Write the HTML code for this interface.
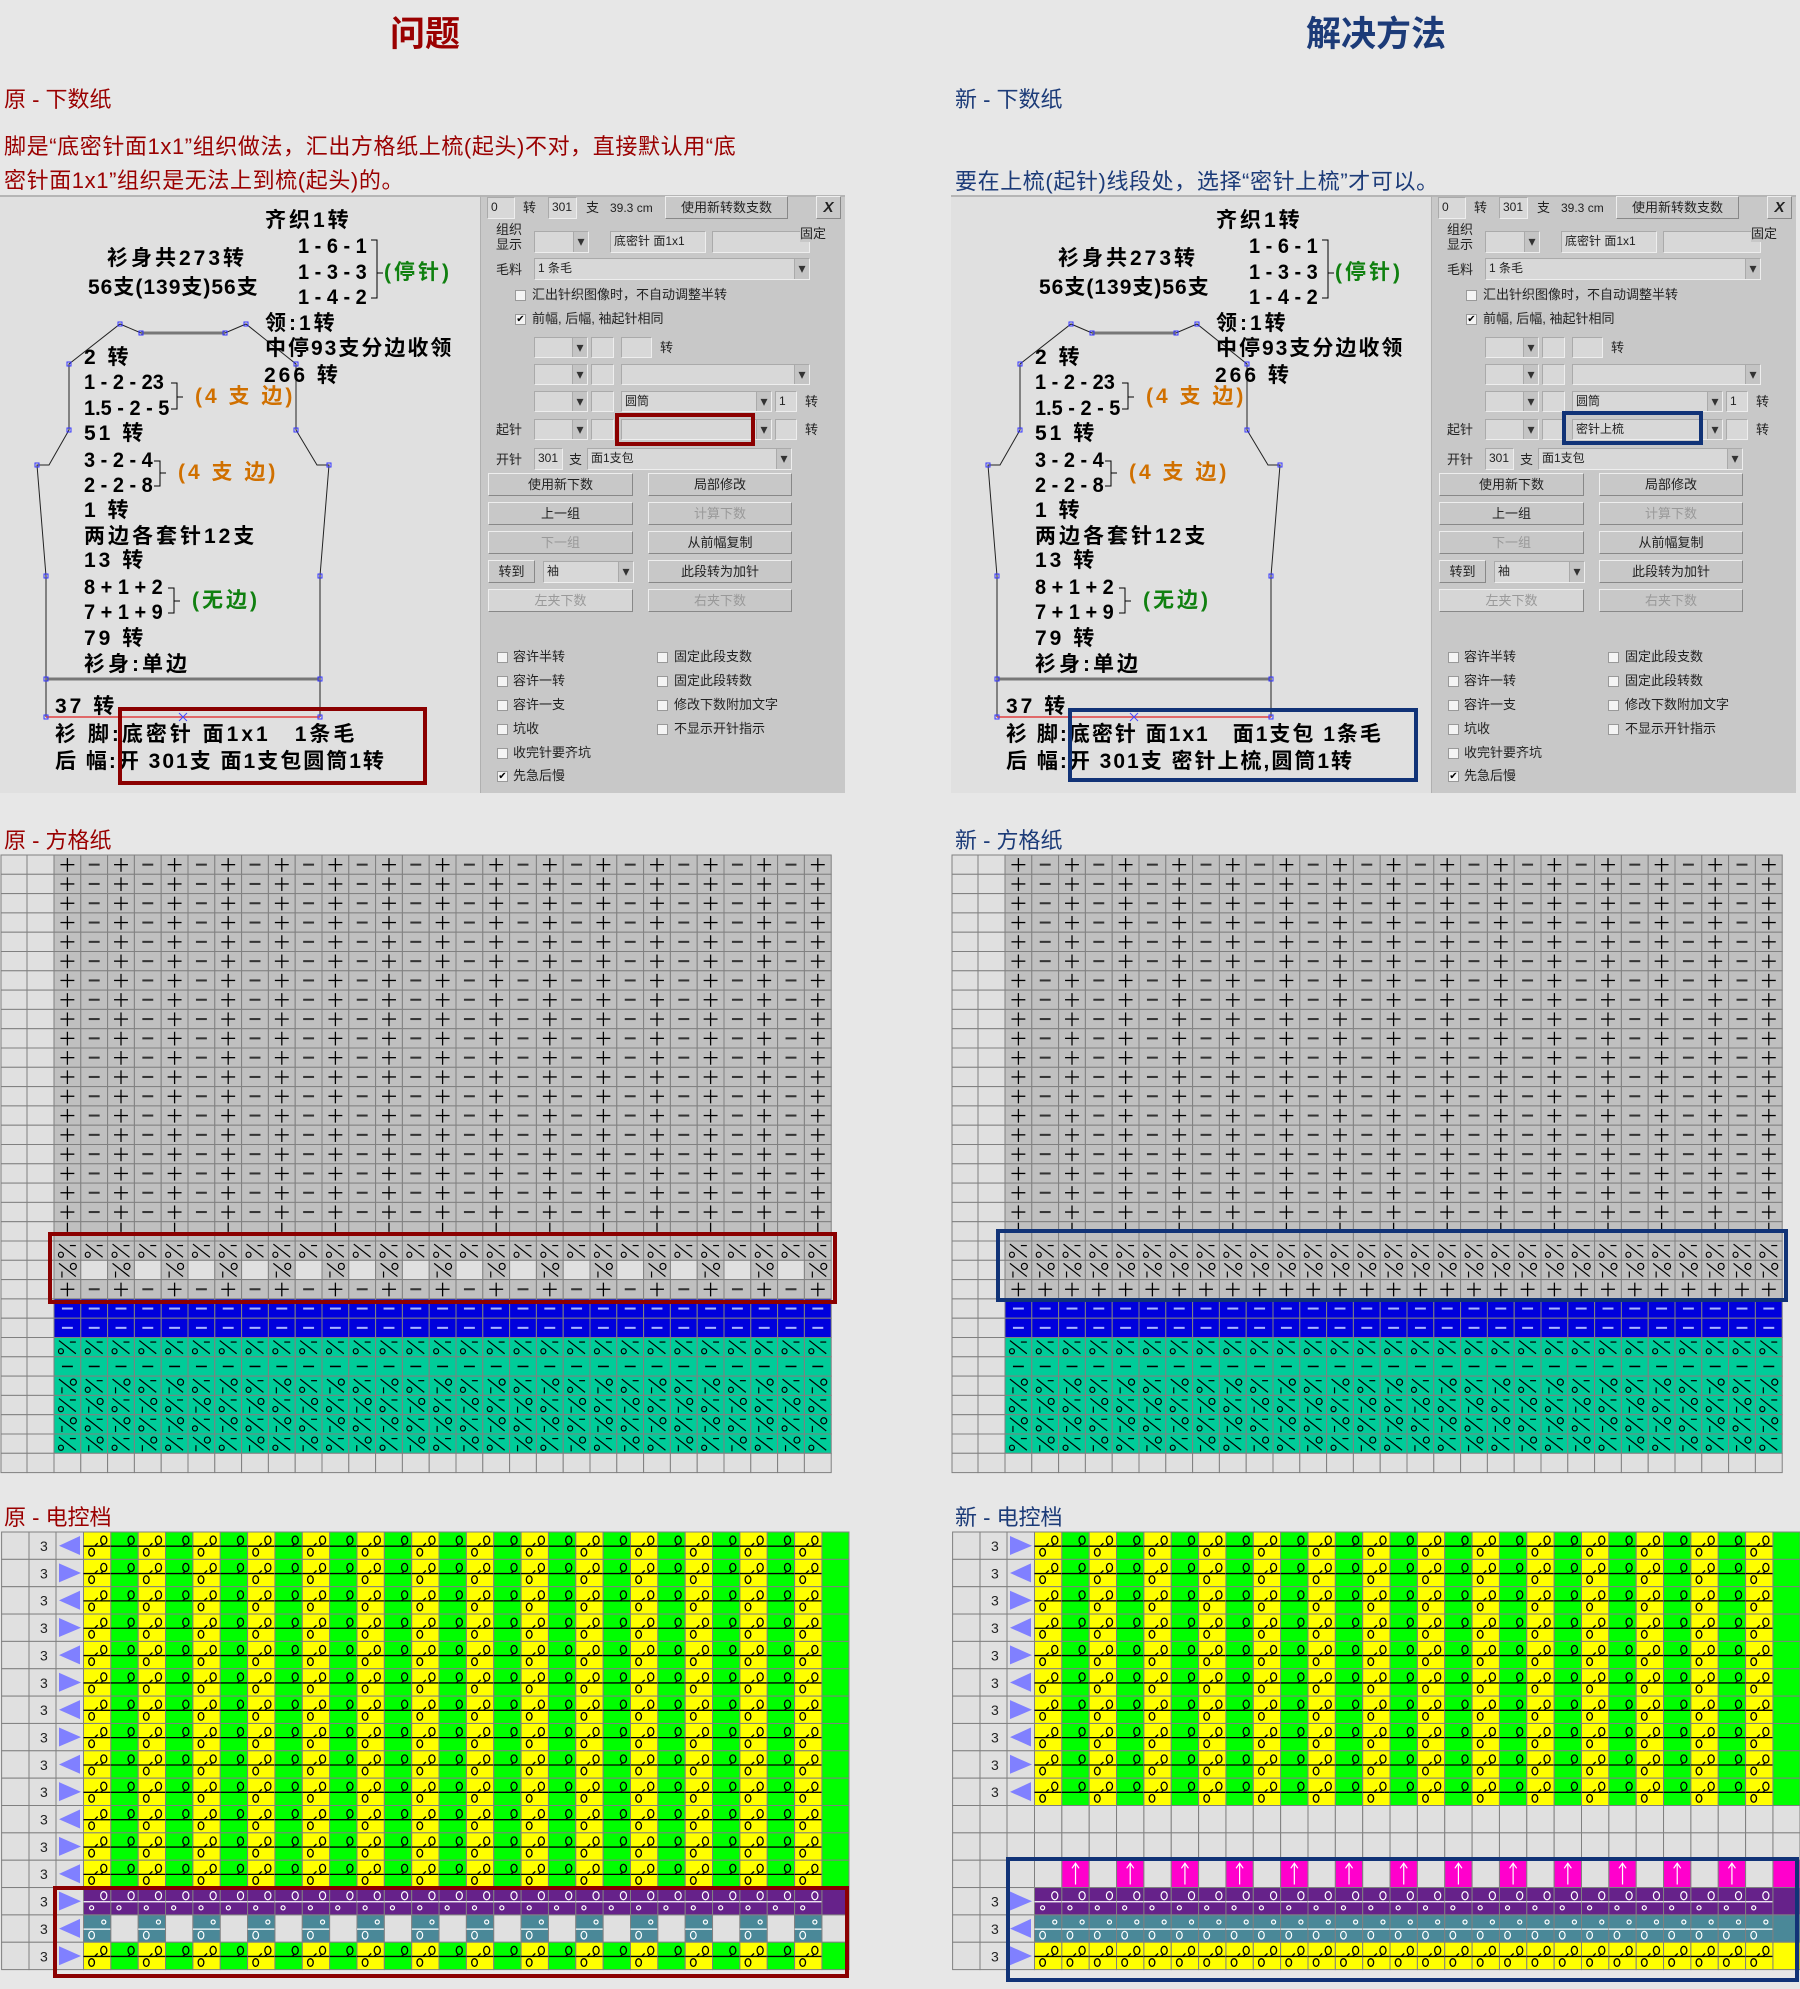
<!DOCTYPE html>
<html><head><meta charset="utf-8">
<style>
*{margin:0;padding:0;box-sizing:border-box}
body{width:1800px;height:1989px;background:#e7e7e7;position:relative;overflow:hidden;font-family:"Liberation Sans","Noto Sans CJK SC",sans-serif}
.a{position:absolute;white-space:nowrap}
.h1{font-size:35px;font-weight:bold;font-family:"Liberation Sans","Noto Sans CJK SC",sans-serif}
.lab{font-size:22px;font-family:"Liberation Sans","Noto Sans CJK SC",sans-serif}
.red{color:#9a0000}.blu{color:#1c3b78}
.shot{position:absolute;top:0;left:0;width:845px;height:800px}
.draw{position:absolute;left:0;top:195px;width:480px;height:598px;background:#e0e0e0;border-top:2px solid #b5b5b5}
.cp{position:absolute;left:480px;top:195px;width:365px;height:598px;background:#c8c8c8;border-top:2px solid #b5b5b5;border-left:1px solid #b0b0b0}
.t{position:absolute;white-space:nowrap;font-size:21px;font-weight:bold;line-height:24px;font-family:"Liberation Sans","Noto Sans CJK SC",sans-serif;color:#000;letter-spacing:3px}
.n{letter-spacing:0;transform:scaleX(.95);transform-origin:0 0}
.o{color:#d07000}.g{color:#108010}
.s{position:absolute;white-space:nowrap;font-size:13px;line-height:16px;color:#222;font-family:"Liberation Sans","Noto Sans CJK SC",sans-serif}
.f{position:absolute;background:#d8d8d8;border:1px solid #aaa;border-right-color:#eee;border-bottom-color:#eee;font-size:12px;line-height:18px;padding-left:3px;color:#222;white-space:nowrap;overflow:hidden}
.dd::after{content:"▾";position:absolute;right:0;top:0;width:14px;height:100%;background:#c4c4c4;border-left:1px solid #aaa;font-size:14px;text-align:center;color:#333}
.b{position:absolute;background:#c8c8c8;border:1px solid #eee;border-right-color:#888;border-bottom-color:#888;font-size:13px;line-height:21px;text-align:center;color:#222;white-space:nowrap}
.dis{color:#999}
.cb{position:absolute;width:11px;height:11px;background:#f4f4f4;border:1px solid #999;font-size:10px;line-height:9px;text-align:center;color:#000}
.box{position:absolute;border:4px solid #8b0000}
.bbox{position:absolute;border:4px solid #113377}
</style></head><body>

<div class="a h1 red" style="left:390px;top:6px">问题</div>
<div class="a h1 blu" style="left:1306px;top:6px">解决方法</div>
<div class="a lab red" style="left:4px;top:82px">原 - 下数纸</div>
<div class="a lab blu" style="left:955px;top:82px">新 - 下数纸</div>
<div class="a lab red" style="left:4px;top:130px;line-height:34px;letter-spacing:0.6px">脚是“底密针面1x1”组织做法，汇出方格纸上梳(起头)不对，直接默认用“底<br>密针面1x1”组织是无法上到梳(起头)的。</div>
<div class="a lab blu" style="left:955px;top:164px;letter-spacing:0.6px">要在上梳(起针)线段处，选择“密针上梳”才可以。</div>

<div class="a lab red" style="left:4px;top:823px">原 - 方格纸</div>
<div class="a lab blu" style="left:955px;top:823px">新 - 方格纸</div>
<div class="a lab red" style="left:4px;top:1500px">原 - 电控档</div>
<div class="a lab blu" style="left:955px;top:1500px">新 - 电控档</div>

<!-- LEFT SCREENSHOT -->
<div class="shot" style="left:0">
<div class="draw"></div>
<svg class="a" style="left:0;top:0" width="480" height="800">
<polyline fill="none" stroke="#222" stroke-width="1" points="46,717 46,679 46,576 37,465 49,465 69,430 69,364 120,324 141,333 225,333 246,324 296,364 296,430 317,465 329,465 320,576 320,679 320,717"/>
<line x1="141" y1="333" x2="225" y2="333" stroke="#777" stroke-width="3"/>
<line x1="46" y1="679" x2="320" y2="679" stroke="#777" stroke-width="3"/>
<line x1="46" y1="717" x2="320" y2="717" stroke="#e04040" stroke-width="1.5"/>
<path d="M179,713 l8,8 M187,713 l-8,8" stroke="#44f" stroke-width="1"/>
<g fill="none" stroke="#33f" stroke-width="1"><rect x="44" y="715" width="4" height="4"/><rect x="318" y="715" width="4" height="4"/><rect x="44" y="677" width="4" height="4"/><rect x="318" y="677" width="4" height="4"/><rect x="44" y="574" width="4" height="4"/><rect x="318" y="574" width="4" height="4"/><rect x="35" y="463" width="4" height="4"/><rect x="327" y="463" width="4" height="4"/><rect x="67" y="428" width="4" height="4"/><rect x="294" y="428" width="4" height="4"/><rect x="67" y="362" width="4" height="4"/><rect x="294" y="362" width="4" height="4"/><rect x="118" y="322" width="4" height="4"/><rect x="139" y="331" width="4" height="4"/><rect x="223" y="331" width="4" height="4"/><rect x="244" y="322" width="4" height="4"/></g>
<g stroke="#000" fill="none"><path d="M371,240 h6 v58 h-6 M377,273 h6"/><path d="M171,383 h6 v26 h-6 M177,397 h6"/><path d="M154,461 h6 v25 h-6 M160,473 h6"/><path d="M168,588 h6 v25 h-6 M174,601 h6"/></g>
</svg>
<div class="t" style="left:265px;top:209px">齐织1转</div>
<div class="t" style="left:107px;top:247px">衫身共273转</div>
<div class="t" style="left:88px;top:276px;letter-spacing:1px">56支(139支)56支</div>
<div class="t n" style="left:298px;top:235px">1 - 6 - 1</div>
<div class="t n" style="left:298px;top:261px">1 - 3 - 3</div>
<div class="t n" style="left:298px;top:286px">1 - 4 - 2</div>
<div class="t g" style="left:384px;top:261px">(停针)</div>
<div class="t" style="left:265px;top:312px">领:1转</div>
<div class="t" style="left:265px;top:337px;letter-spacing:2px">中停93支分边收领</div>
<div class="t" style="left:264px;top:364px">266 转</div>
<div class="t" style="left:84px;top:346px">2 转</div>
<div class="t n" style="left:84px;top:371px">1 - 2 - 23</div>
<div class="t n" style="left:84px;top:397px">1.5 - 2 - 5</div>
<div class="t o" style="left:195px;top:385px">(4 支 边)</div>
<div class="t" style="left:84px;top:422px">51 转</div>
<div class="t n" style="left:84px;top:449px">3 - 2 - 4</div>
<div class="t n" style="left:84px;top:474px">2 - 2 - 8</div>
<div class="t o" style="left:178px;top:461px">(4 支 边)</div>
<div class="t" style="left:84px;top:499px">1 转</div>
<div class="t" style="left:84px;top:525px">两边各套针12支</div>
<div class="t" style="left:84px;top:549px">13 转</div>
<div class="t n" style="left:84px;top:576px">8 + 1 + 2</div>
<div class="t n" style="left:84px;top:601px">7 + 1 + 9</div>
<div class="t g" style="left:192px;top:589px">(无边)</div>
<div class="t" style="left:84px;top:627px">79 转</div>
<div class="t" style="left:84px;top:653px">衫身:单边</div>
<div class="t" style="left:55px;top:695px">37 转</div>
<div class="t" style="left:55px;top:723px">衫 脚:底密针 面1x1　1条毛</div>
<div class="t" style="left:55px;top:750px;letter-spacing:2px">后 幅:开 301支 面1支包圆筒1转</div>
<div class="box" style="left:118px;top:707px;width:309px;height:78px"></div>

<div class="cp"></div>
<div class="f" style="left:487px;top:197px;width:28px;height:22px">0</div>
<div class="s" style="left:523px;top:200px">转</div>
<div class="f" style="left:548px;top:197px;width:29px;height:22px">301</div>
<div class="s" style="left:586px;top:200px">支</div>
<div class="s" style="left:610px;top:200px;font-size:12px">39.3 cm</div>
<div class="b" style="left:665px;top:196px;width:123px;height:23px">使用新转数支数</div>
<div class="b" style="left:816px;top:196px;width:25px;height:23px;font-weight:bold;font-style:italic;font-size:15px">X</div>
<div class="s" style="left:496px;top:222px;line-height:15px">组织<br>显示</div>
<div class="f dd" style="left:534px;top:231px;width:55px;height:22px"></div>
<div class="f" style="left:610px;top:231px;width:96px;height:22px">底密针 面1x1</div>
<div class="f" style="left:712px;top:231px;width:98px;height:22px"></div>
<div class="s" style="left:800px;top:226px;background:#c8c8c8">固定</div>
<div class="s" style="left:496px;top:262px">毛料</div>
<div class="f dd" style="left:534px;top:258px;width:276px;height:22px">1 条毛</div>
<div class="cb" style="left:515px;top:290px"></div><div class="s" style="left:532px;top:287px">汇出针织图像时，不自动调整半转</div>
<div class="cb" style="left:515px;top:314px">✔</div><div class="s" style="left:532px;top:311px">前幅, 后幅, 袖起针相同</div>
<div class="f dd" style="left:534px;top:337px;width:54px;height:21px"></div><div class="f" style="left:591px;top:337px;width:23px;height:21px"></div><div class="f" style="left:621px;top:337px;width:31px;height:21px"></div><div class="s" style="left:660px;top:340px">转</div>
<div class="f dd" style="left:534px;top:364px;width:54px;height:21px"></div><div class="f" style="left:591px;top:364px;width:23px;height:21px"></div><div class="f dd" style="left:621px;top:364px;width:189px;height:21px"></div>
<div class="f dd" style="left:534px;top:391px;width:54px;height:21px"></div><div class="f" style="left:591px;top:391px;width:23px;height:21px"></div><div class="f dd" style="left:621px;top:391px;width:151px;height:21px">圆筒</div><div class="f" style="left:775px;top:391px;width:22px;height:21px">1</div><div class="s" style="left:805px;top:394px">转</div>
<div class="s" style="left:496px;top:422px">起针</div>
<div class="f dd" style="left:534px;top:419px;width:54px;height:21px"></div><div class="f" style="left:591px;top:419px;width:23px;height:21px"></div><div class="f dd" style="left:621px;top:419px;width:151px;height:21px"></div><div class="f" style="left:775px;top:419px;width:22px;height:21px"></div><div class="s" style="left:805px;top:422px">转</div>
<div class="box" style="left:615px;top:413px;width:140px;height:33px"></div>
<div class="s" style="left:496px;top:452px">开针</div>
<div class="f" style="left:534px;top:448px;width:29px;height:22px">301</div><div class="s" style="left:569px;top:452px">支</div><div class="f dd" style="left:587px;top:448px;width:205px;height:22px">面1支包</div>
<div class="b" style="left:488px;top:473px;width:145px;height:23px">使用新下数</div><div class="b" style="left:648px;top:473px;width:144px;height:23px">局部修改</div>
<div class="b" style="left:488px;top:502px;width:145px;height:23px">上一组</div><div class="b dis" style="left:648px;top:502px;width:144px;height:23px">计算下数</div>
<div class="b dis" style="left:488px;top:531px;width:145px;height:23px">下一组</div><div class="b" style="left:648px;top:531px;width:144px;height:23px">从前幅复制</div>
<div class="b" style="left:488px;top:560px;width:47px;height:23px">转到</div><div class="f dd" style="left:543px;top:561px;width:91px;height:22px">袖</div><div class="b" style="left:648px;top:560px;width:144px;height:23px">此段转为加针</div>
<div class="b dis" style="left:488px;top:589px;width:145px;height:23px;background:#d6d6d6">左夹下数</div><div class="b dis" style="left:648px;top:589px;width:144px;height:23px">右夹下数</div>
<div class="cb" style="left:497px;top:652px"></div><div class="s" style="left:513px;top:649px">容许半转</div>
<div class="cb" style="left:657px;top:652px"></div><div class="s" style="left:674px;top:649px">固定此段支数</div>
<div class="cb" style="left:497px;top:676px"></div><div class="s" style="left:513px;top:673px">容许一转</div>
<div class="cb" style="left:657px;top:676px"></div><div class="s" style="left:674px;top:673px">固定此段转数</div>
<div class="cb" style="left:497px;top:700px"></div><div class="s" style="left:513px;top:697px">容许一支</div>
<div class="cb" style="left:657px;top:700px"></div><div class="s" style="left:674px;top:697px">修改下数附加文字</div>
<div class="cb" style="left:497px;top:724px"></div><div class="s" style="left:513px;top:721px">坑收</div>
<div class="cb" style="left:657px;top:724px"></div><div class="s" style="left:674px;top:721px">不显示开针指示</div>
<div class="cb" style="left:497px;top:748px"></div><div class="s" style="left:513px;top:745px">收完针要齐坑</div>
<div class="cb" style="left:497px;top:771px">✔</div><div class="s" style="left:513px;top:768px">先急后慢</div>
</div>

<!-- RIGHT SCREENSHOT -->
<div class="shot" style="left:951px">
<div class="draw"></div>
<svg class="a" style="left:0;top:0" width="480" height="800">
<polyline fill="none" stroke="#222" stroke-width="1" points="46,717 46,679 46,576 37,465 49,465 69,430 69,364 120,324 141,333 225,333 246,324 296,364 296,430 317,465 329,465 320,576 320,679 320,717"/>
<line x1="141" y1="333" x2="225" y2="333" stroke="#777" stroke-width="3"/>
<line x1="46" y1="679" x2="320" y2="679" stroke="#777" stroke-width="3"/>
<line x1="46" y1="717" x2="320" y2="717" stroke="#e04040" stroke-width="1.5"/>
<path d="M179,713 l8,8 M187,713 l-8,8" stroke="#44f" stroke-width="1"/>
<g fill="none" stroke="#33f" stroke-width="1"><rect x="44" y="715" width="4" height="4"/><rect x="318" y="715" width="4" height="4"/><rect x="44" y="677" width="4" height="4"/><rect x="318" y="677" width="4" height="4"/><rect x="44" y="574" width="4" height="4"/><rect x="318" y="574" width="4" height="4"/><rect x="35" y="463" width="4" height="4"/><rect x="327" y="463" width="4" height="4"/><rect x="67" y="428" width="4" height="4"/><rect x="294" y="428" width="4" height="4"/><rect x="67" y="362" width="4" height="4"/><rect x="294" y="362" width="4" height="4"/><rect x="118" y="322" width="4" height="4"/><rect x="139" y="331" width="4" height="4"/><rect x="223" y="331" width="4" height="4"/><rect x="244" y="322" width="4" height="4"/></g>
<g stroke="#000" fill="none"><path d="M371,240 h6 v58 h-6 M377,273 h6"/><path d="M171,383 h6 v26 h-6 M177,397 h6"/><path d="M154,461 h6 v25 h-6 M160,473 h6"/><path d="M168,588 h6 v25 h-6 M174,601 h6"/></g>
</svg>
<div class="t" style="left:265px;top:209px">齐织1转</div>
<div class="t" style="left:107px;top:247px">衫身共273转</div>
<div class="t" style="left:88px;top:276px;letter-spacing:1px">56支(139支)56支</div>
<div class="t n" style="left:298px;top:235px">1 - 6 - 1</div>
<div class="t n" style="left:298px;top:261px">1 - 3 - 3</div>
<div class="t n" style="left:298px;top:286px">1 - 4 - 2</div>
<div class="t g" style="left:384px;top:261px">(停针)</div>
<div class="t" style="left:265px;top:312px">领:1转</div>
<div class="t" style="left:265px;top:337px;letter-spacing:2px">中停93支分边收领</div>
<div class="t" style="left:264px;top:364px">266 转</div>
<div class="t" style="left:84px;top:346px">2 转</div>
<div class="t n" style="left:84px;top:371px">1 - 2 - 23</div>
<div class="t n" style="left:84px;top:397px">1.5 - 2 - 5</div>
<div class="t o" style="left:195px;top:385px">(4 支 边)</div>
<div class="t" style="left:84px;top:422px">51 转</div>
<div class="t n" style="left:84px;top:449px">3 - 2 - 4</div>
<div class="t n" style="left:84px;top:474px">2 - 2 - 8</div>
<div class="t o" style="left:178px;top:461px">(4 支 边)</div>
<div class="t" style="left:84px;top:499px">1 转</div>
<div class="t" style="left:84px;top:525px">两边各套针12支</div>
<div class="t" style="left:84px;top:549px">13 转</div>
<div class="t n" style="left:84px;top:576px">8 + 1 + 2</div>
<div class="t n" style="left:84px;top:601px">7 + 1 + 9</div>
<div class="t g" style="left:192px;top:589px">(无边)</div>
<div class="t" style="left:84px;top:627px">79 转</div>
<div class="t" style="left:84px;top:653px">衫身:单边</div>
<div class="t" style="left:55px;top:695px">37 转</div>
<div class="t" style="left:55px;top:723px;letter-spacing:2px">衫 脚:底密针 面1x1　面1支包 1条毛</div>
<div class="t" style="left:55px;top:750px;letter-spacing:2px">后 幅:开 301支 密针上梳,圆筒1转</div>
<div class="bbox" style="left:117px;top:708px;width:350px;height:74px"></div>

<div class="cp"></div>
<div class="f" style="left:487px;top:197px;width:28px;height:22px">0</div>
<div class="s" style="left:523px;top:200px">转</div>
<div class="f" style="left:548px;top:197px;width:29px;height:22px">301</div>
<div class="s" style="left:586px;top:200px">支</div>
<div class="s" style="left:610px;top:200px;font-size:12px">39.3 cm</div>
<div class="b" style="left:665px;top:196px;width:123px;height:23px">使用新转数支数</div>
<div class="b" style="left:816px;top:196px;width:25px;height:23px;font-weight:bold;font-style:italic;font-size:15px">X</div>
<div class="s" style="left:496px;top:222px;line-height:15px">组织<br>显示</div>
<div class="f dd" style="left:534px;top:231px;width:55px;height:22px"></div>
<div class="f" style="left:610px;top:231px;width:96px;height:22px">底密针 面1x1</div>
<div class="f" style="left:712px;top:231px;width:98px;height:22px"></div>
<div class="s" style="left:800px;top:226px;background:#c8c8c8">固定</div>
<div class="s" style="left:496px;top:262px">毛料</div>
<div class="f dd" style="left:534px;top:258px;width:276px;height:22px">1 条毛</div>
<div class="cb" style="left:515px;top:290px"></div><div class="s" style="left:532px;top:287px">汇出针织图像时，不自动调整半转</div>
<div class="cb" style="left:515px;top:314px">✔</div><div class="s" style="left:532px;top:311px">前幅, 后幅, 袖起针相同</div>
<div class="f dd" style="left:534px;top:337px;width:54px;height:21px"></div><div class="f" style="left:591px;top:337px;width:23px;height:21px"></div><div class="f" style="left:621px;top:337px;width:31px;height:21px"></div><div class="s" style="left:660px;top:340px">转</div>
<div class="f dd" style="left:534px;top:364px;width:54px;height:21px"></div><div class="f" style="left:591px;top:364px;width:23px;height:21px"></div><div class="f dd" style="left:621px;top:364px;width:189px;height:21px"></div>
<div class="f dd" style="left:534px;top:391px;width:54px;height:21px"></div><div class="f" style="left:591px;top:391px;width:23px;height:21px"></div><div class="f dd" style="left:621px;top:391px;width:151px;height:21px">圆筒</div><div class="f" style="left:775px;top:391px;width:22px;height:21px">1</div><div class="s" style="left:805px;top:394px">转</div>
<div class="s" style="left:496px;top:422px">起针</div>
<div class="f dd" style="left:534px;top:419px;width:54px;height:21px"></div><div class="f" style="left:591px;top:419px;width:23px;height:21px"></div><div class="f dd" style="left:621px;top:419px;width:151px;height:21px">密针上梳</div><div class="f" style="left:775px;top:419px;width:22px;height:21px"></div><div class="s" style="left:805px;top:422px">转</div>
<div class="bbox" style="left:611px;top:411px;width:141px;height:34px"></div>
<div class="s" style="left:496px;top:452px">开针</div>
<div class="f" style="left:534px;top:448px;width:29px;height:22px">301</div><div class="s" style="left:569px;top:452px">支</div><div class="f dd" style="left:587px;top:448px;width:205px;height:22px">面1支包</div>
<div class="b" style="left:488px;top:473px;width:145px;height:23px">使用新下数</div><div class="b" style="left:648px;top:473px;width:144px;height:23px">局部修改</div>
<div class="b" style="left:488px;top:502px;width:145px;height:23px">上一组</div><div class="b dis" style="left:648px;top:502px;width:144px;height:23px">计算下数</div>
<div class="b dis" style="left:488px;top:531px;width:145px;height:23px">下一组</div><div class="b" style="left:648px;top:531px;width:144px;height:23px">从前幅复制</div>
<div class="b" style="left:488px;top:560px;width:47px;height:23px">转到</div><div class="f dd" style="left:543px;top:561px;width:91px;height:22px">袖</div><div class="b" style="left:648px;top:560px;width:144px;height:23px">此段转为加针</div>
<div class="b dis" style="left:488px;top:589px;width:145px;height:23px;background:#d6d6d6">左夹下数</div><div class="b dis" style="left:648px;top:589px;width:144px;height:23px">右夹下数</div>
<div class="cb" style="left:497px;top:652px"></div><div class="s" style="left:513px;top:649px">容许半转</div>
<div class="cb" style="left:657px;top:652px"></div><div class="s" style="left:674px;top:649px">固定此段支数</div>
<div class="cb" style="left:497px;top:676px"></div><div class="s" style="left:513px;top:673px">容许一转</div>
<div class="cb" style="left:657px;top:676px"></div><div class="s" style="left:674px;top:673px">固定此段转数</div>
<div class="cb" style="left:497px;top:700px"></div><div class="s" style="left:513px;top:697px">容许一支</div>
<div class="cb" style="left:657px;top:700px"></div><div class="s" style="left:674px;top:697px">修改下数附加文字</div>
<div class="cb" style="left:497px;top:724px"></div><div class="s" style="left:513px;top:721px">坑收</div>
<div class="cb" style="left:657px;top:724px"></div><div class="s" style="left:674px;top:721px">不显示开针指示</div>
<div class="cb" style="left:497px;top:748px"></div><div class="s" style="left:513px;top:745px">收完针要齐坑</div>
<div class="cb" style="left:497px;top:771px">✔</div><div class="s" style="left:513px;top:768px">先急后慢</div>
</div>

<svg id="g" class="a" style="left:0;top:0" width="1800" height="1989" xmlns="http://www.w3.org/2000/svg">
<defs>
<g id="pl" stroke="#000" stroke-width="1.3"><line x1="13.5" y1="3" x2="13.5" y2="16.5"/><line x1="6.5" y1="9.5" x2="20.5" y2="9.5"/></g>
<g id="mi" stroke="#333" stroke-width="2"><line x1="8" y1="9.5" x2="19" y2="9.5"/></g>
<g id="ba" stroke="#000" stroke-width="1.3"><line x1="13.5" y1="1" x2="13.5" y2="10"/></g>
<g id="sa" stroke="#000" stroke-width="1.2" fill="none"><line x1="5" y1="3" x2="22" y2="16"/><line x1="16" y1="4.5" x2="22" y2="4.5"/><circle cx="7" cy="13.5" r="2.5"/></g>
<g id="sb" stroke="#000" stroke-width="1.2" fill="none"><line x1="5" y1="3" x2="22" y2="16"/><circle cx="19.5" cy="6" r="3"/><line x1="8" y1="11" x2="8" y2="17"/></g>
<g id="bm" stroke="#aab4ff" stroke-width="2"><line x1="8" y1="9.5" x2="19" y2="9.5"/></g>
<g id="td" stroke="#000" stroke-width="1.5"><line x1="8" y1="9.5" x2="19" y2="9.5"/></g>
<g id="ye" stroke="#000" stroke-width="1.3" fill="none"><line x1="0" y1="14" x2="27" y2="14"/><path d="M11,14 L14,11"/><ellipse cx="20" cy="8" rx="3" ry="4"/><path d="M17,14 L19,12"/><ellipse cx="8" cy="20" rx="2.8" ry="3.8"/></g>
<g id="gr" stroke="#000" stroke-width="1.3" fill="none"><line x1="0" y1="14" x2="27" y2="14"/><ellipse cx="20" cy="8" rx="3" ry="4"/><path d="M17,14 L19,12"/></g>
<g id="pu" stroke="#fff" stroke-width="1.2" fill="none"><line x1="0" y1="14" x2="27" y2="14"/><ellipse cx="20" cy="8" rx="3" ry="4"/><circle cx="8" cy="20" r="2"/></g>
<g id="te" stroke="#fff" stroke-width="1.2" fill="none"><line x1="0" y1="14" x2="27" y2="14"/><circle cx="20" cy="7" r="2"/><ellipse cx="8" cy="20" rx="2.8" ry="3.8"/></g>
<g id="ar" stroke="#fff" stroke-width="1.2"><line x1="13.5" y1="24" x2="13.5" y2="3"/><path d="M10,8 L13.5,3 L17,8" fill="none"/></g>
</defs>
</svg>
<div class="box" style="left:48px;top:1232px;width:789px;height:72px"></div>
<div class="bbox" style="left:996px;top:1229px;width:792px;height:73px"></div>
<div class="box" style="left:53px;top:1886px;width:796px;height:92px"></div>
<div class="bbox" style="left:1006px;top:1857px;width:793px;height:125px"></div>

<script>
var S=document.getElementById('g'),out='';
function R(x,y,w,h,f){out+='<rect x="'+x+'" y="'+y+'" width="'+w+'" height="'+h+'" fill="'+f+'" stroke="#808080" stroke-width="1"/>';}
function U(id,x,y,sx,sy){out+='<use href="#'+id+'" transform="translate('+x+','+y+') scale('+sx+','+sy+')"/>';}
function sq(x0,right){
 var y0=855,rh=19.3,cw=26.8;
 for(var i=0;i<32;i++){
  var y=y0+i*rh;
  R(x0+1,y,26,rh,'#e0e0e0');R(x0+27,y,27,rh,'#e0e0e0');
  for(var j=0;j<29;j++){
   var x=x0+54+j*cw,bg='#c0c0c0',sym=null;
   if(i<=18){sym=j%2?'mi':'pl';}
   else if(i==19){sym=j%2?null:'ba';}
   else if(i==20){sym='sa';}
   else if(i==21){if(right)sym='sb';else{ if(j%2){bg='#e0e0e0';}else sym='sb';}}
   else if(i==22){sym=right?'pl':(j%2?'mi':'pl');}
   else if(i<=24){bg='#0000dd';sym='bm';}
   else if(i<=30){bg='#00cc99';var k=i-25;
     if(k==0)sym='sa';else if(k==1)sym='td';else sym=((j+k)%2?'sa':'sb');}
   else {bg='#e0e0e0';}
   R(x,y,cw,rh,bg);
   if(sym)U(sym,x,y,cw/27,rh/19);
  }
 }
}
sq(0,false);sq(951,true);
function tri(x,y,dir){var c='#8080ff';if(dir<0)out+='<polygon fill="'+c+'" points="'+(x+24)+','+(y+4)+' '+(x+3)+','+(y+13.7)+' '+(x+24)+','+(y+23)+'"/>';else out+='<polygon fill="'+c+'" points="'+(x+3)+','+(y+4)+' '+(x+25)+','+(y+13.7)+' '+(x+3)+','+(y+23)+'"/>';}
function el(x0,rows){
 var y0=1532,rh=27.35,cw=27.35;
 for(var i=0;i<rows.length;i++){
  var r=rows[i],y=y0+i*rh;
  R(x0+1.6,y,27.4,rh,'#e0e0e0');R(x0+29,y,27,rh,'#e0e0e0');R(x0+56,y,27.5,rh,'#e0e0e0');
  if(r.n)out+='<text x="'+(x0+40)+'" y="'+(y+19)+'" font-family="Liberation Sans, sans-serif" font-size="14" fill="#222">3</text>';
  if(r.a)tri(x0+56,y,r.a);
  for(var j=0;j<28;j++){
   var x=x0+83.5+j*cw,bg='#e0e0e0',sym=null,t=r.t;
   if(t=='yg'){if(j%2){bg='#00ff00';sym='gr';}else{bg='#ffff00';sym='ye';}}
   else if(t=='yy'){bg='#ffff00';sym='ye';}
   else if(t=='pu'){bg='#66228a';sym='pu';}
   else if(t=='tg'){if(j%2){bg='#e0e0e0';}else{bg='#4a8898';sym='te';}}
   else if(t=='tt'){bg='#4a8898';sym='te';}
   else if(t=='pk'){if(j%2){bg='#ff00cc';sym='ar';}}
   if(x+cw>x0+849){var w=x0+849-x;if(w<=0)continue;R(x,y,w,rh,bg);continue;}
   R(x,y,cw,rh,bg);
   if(sym)U(sym,x,y,cw/27,rh/27);
  }
 }
}
var L=[];for(var i=0;i<13;i++)L.push({t:'yg',n:1,a:i%2?1:-1});
L.push({t:'pu',n:1,a:1});L.push({t:'tg',n:1,a:-1});L.push({t:'yg',n:1,a:1});
el(0,L);
var Rr=[];for(var i=0;i<10;i++)Rr.push({t:'yg',n:1,a:i%2?-1:1});
Rr.push({t:'e'});Rr.push({t:'e'});Rr.push({t:'pk'});
Rr.push({t:'pu',n:1,a:1});Rr.push({t:'tt',n:1,a:-1});Rr.push({t:'yy',n:1,a:1});
el(951,Rr);
S.insertAdjacentHTML('beforeend',out);
</script>
</body></html>
